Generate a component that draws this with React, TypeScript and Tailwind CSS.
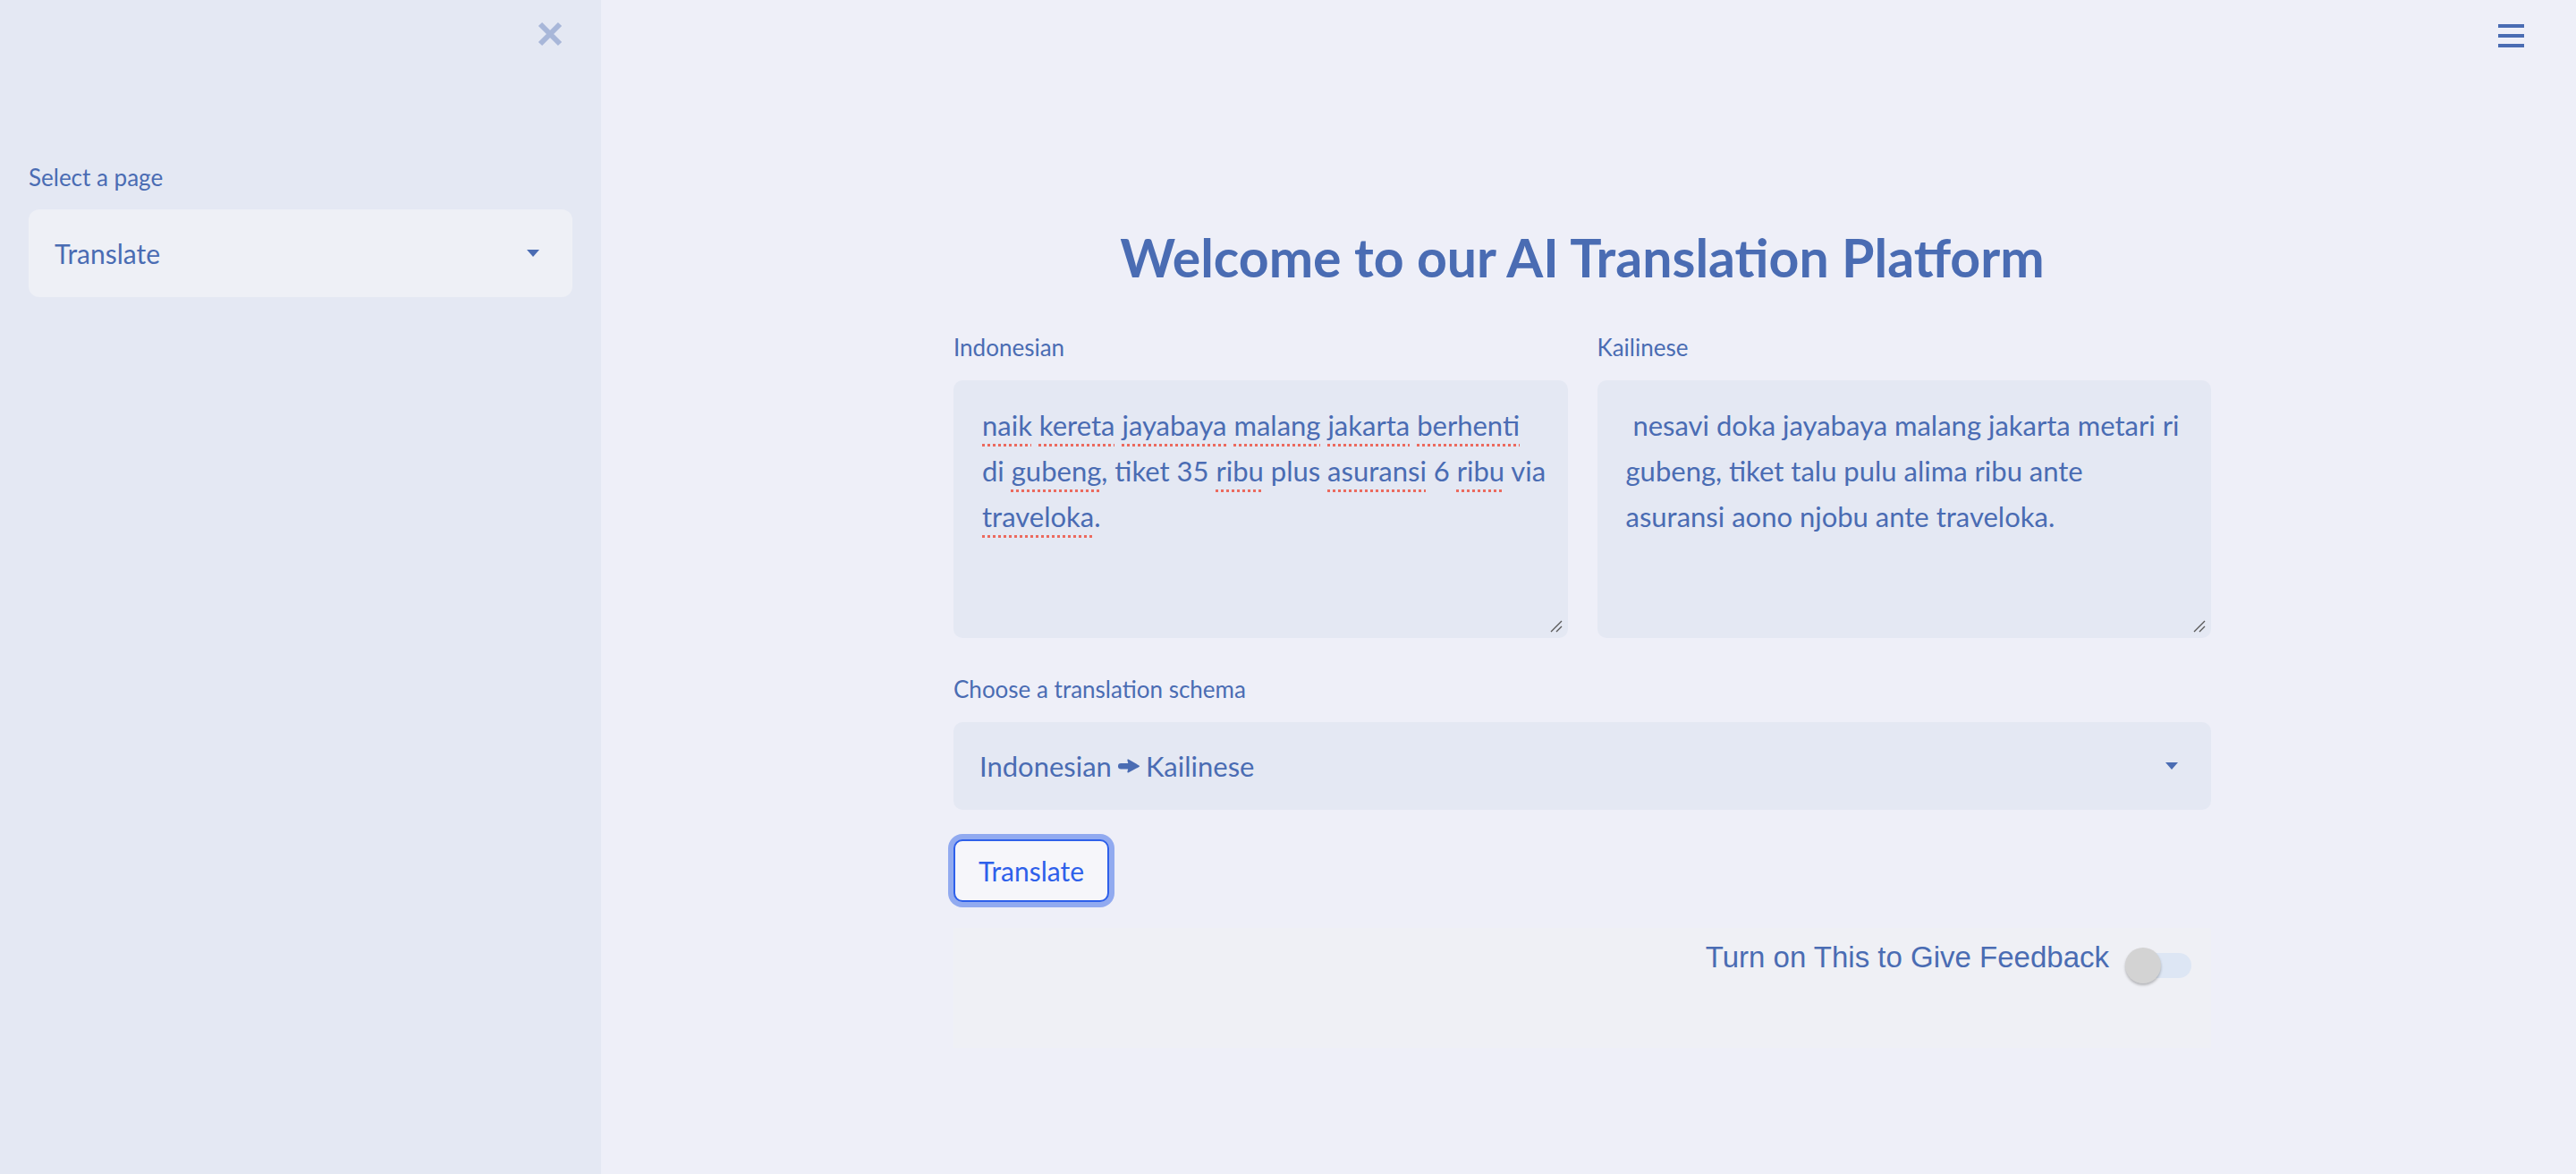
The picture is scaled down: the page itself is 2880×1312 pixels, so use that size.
import React from "react";

const spell = "underline decoration-dotted decoration-[#ec6a5e] decoration-[3px] underline-offset-[9px]";

function Caret({ className }: { className?: string }) {
  return (
    <svg className={className} width="14" height="8" viewBox="0 0 14 8">
      <path d="M0 0 L14 0 L7 8 Z" fill="#4a6cb3" />
    </svg>
  );
}

function HeavyArrow() {
  return (
    <svg className="inline-block align-[-1px] mx-[6px]" width="26" height="18" viewBox="0 0 26 18">
      <rect x="1" y="6" width="15" height="6.5" rx="3.2" fill="#4a6cb3" />
      <path d="M12.5 1.5 Q11 1 11.5 3 L13 9.2 L11.5 15 Q11 17 12.5 16.5 L24.5 10 Q25.5 9.2 24.5 8.4 Z" fill="#4a6cb3" />
    </svg>
  );
}

function ResizeHandle() {
  return (
    <svg className="absolute right-[5px] bottom-[5px]" width="16" height="16" viewBox="0 0 16 16">
      <path d="M14 2 L2 14 M14 8 L8 14" stroke="#5a5a5a" strokeWidth="1.4" />
    </svg>
  );
}

export default function App() {
  return (
    <div className="flex w-full h-[1312px] overflow-hidden font-['Lato',sans-serif] text-[#4a6cb3]">
      {/* Sidebar */}
      <aside className="w-[672px] shrink-0 bg-[#e4e8f3] flex flex-col px-[32px]">
        <div className="flex justify-end pt-[24px] pr-[10px]">
          <svg width="30" height="28" viewBox="0 0 30 28">
            <path d="M4 3 L26 25 M26 3 L4 25" stroke="#a8b7d9" strokeWidth="6" />
          </svg>
        </div>
        <div className="mt-[128px] text-[26px] leading-[36px]">Select a page</div>
        <div className="mt-[18px] h-[98px] rounded-[12px] bg-[#eef0f6] flex items-center justify-between pl-[29px] pr-[37px]">
          <span className="text-[30px]">Translate</span>
          <Caret />
        </div>
      </aside>

      {/* Main */}
      <main className="flex-1 bg-[#eeeff8] flex flex-col">
        <div className="flex justify-end pt-[27px] pr-[58px]">
          <div className="flex flex-col gap-[7px] w-[29px]">
            <div className="h-[4px] bg-[#4a6cb3]" />
            <div className="h-[4px] bg-[#4a6cb3]" />
            <div className="h-[4px] bg-[#4a6cb3]" />
          </div>
        </div>

        <div className="ml-[394px] w-[1406px] flex flex-col mt-[200px]">
          <h1 className="text-center text-[59px] leading-[70px] font-bold">Welcome to our AI Translation Platform</h1>

          <div className="grid grid-cols-2 gap-[33px] mt-[47px]">
            <div className="flex flex-col">
              <div className="text-[26px] leading-[36px]">Indonesian</div>
              <div className="relative mt-[19px] h-[288px] rounded-[10px] bg-[#e4e8f3] pt-[25px] px-[32px] text-[31px] leading-[51px] whitespace-nowrap">
                <div>
                  <span className={spell}>naik</span> <span className={spell}>kereta</span>{" "}
                  <span className={spell}>jayabaya</span> <span className={spell}>malang</span>{" "}
                  <span className={spell}>jakarta</span> <span className={spell}>berhenti</span>
                </div>
                <div>
                  di <span className={spell}>gubeng</span>, tiket 35 <span className={spell}>ribu</span> plus{" "}
                  <span className={spell}>asuransi</span> 6 <span className={spell}>ribu</span> via
                </div>
                <div>
                  <span className={spell}>traveloka</span>.
                </div>
                <ResizeHandle />
              </div>
            </div>
            <div className="flex flex-col">
              <div className="text-[26px] leading-[36px]">Kailinese</div>
              <div className="relative mt-[19px] h-[288px] rounded-[10px] bg-[#e4e8f3] pt-[25px] px-[32px] text-[31px] leading-[51px] whitespace-pre">
                <div> nesavi doka jayabaya malang jakarta metari ri</div>
                <div>gubeng, tiket talu pulu alima ribu ante</div>
                <div>asuransi aono njobu ante traveloka.</div>
                <ResizeHandle />
              </div>
            </div>
          </div>

          <div className="mt-[39px] text-[26px] leading-[36px]">Choose a translation schema</div>
          <div className="mt-[19px] h-[98px] rounded-[10px] bg-[#e4e8f3] flex items-center justify-between pl-[29px] pr-[37px]">
            <span className="text-[31px] flex items-center">
              Indonesian
              <HeavyArrow />
              Kailinese
            </span>
            <Caret />
          </div>

          <div className="mt-[33px]">
            <button className="w-[174px] h-[70px] rounded-[10px] border-2 border-[#2e60ea] bg-[#f6f6fa] ring-[6px] ring-[#91aaf0] text-[30px] text-[#2e60ea]">
              Translate
            </button>
          </div>

          <div className="mt-[29px] h-[134px] bg-[#eff0f5] flex items-start justify-end pr-[22px] pt-[14px]">
            <span className="font-['Liberation_Sans',Arial,sans-serif] text-[33px] leading-[38px] mt-[0px]">Turn on This to Give Feedback</span>
            <div className="relative ml-[18px] mt-[8px] w-[74px] h-[40px]">
              <div className="absolute left-[14px] top-[6px] w-[60px] h-[28px] rounded-full bg-[#dde6f4]" />
              <div className="absolute left-0 top-0 w-[40px] h-[40px] rounded-full bg-[#d3d3d3] shadow-[0_2px_3px_rgba(0,0,0,0.25)]" />
            </div>
          </div>
        </div>
      </main>
    </div>
  );
}
